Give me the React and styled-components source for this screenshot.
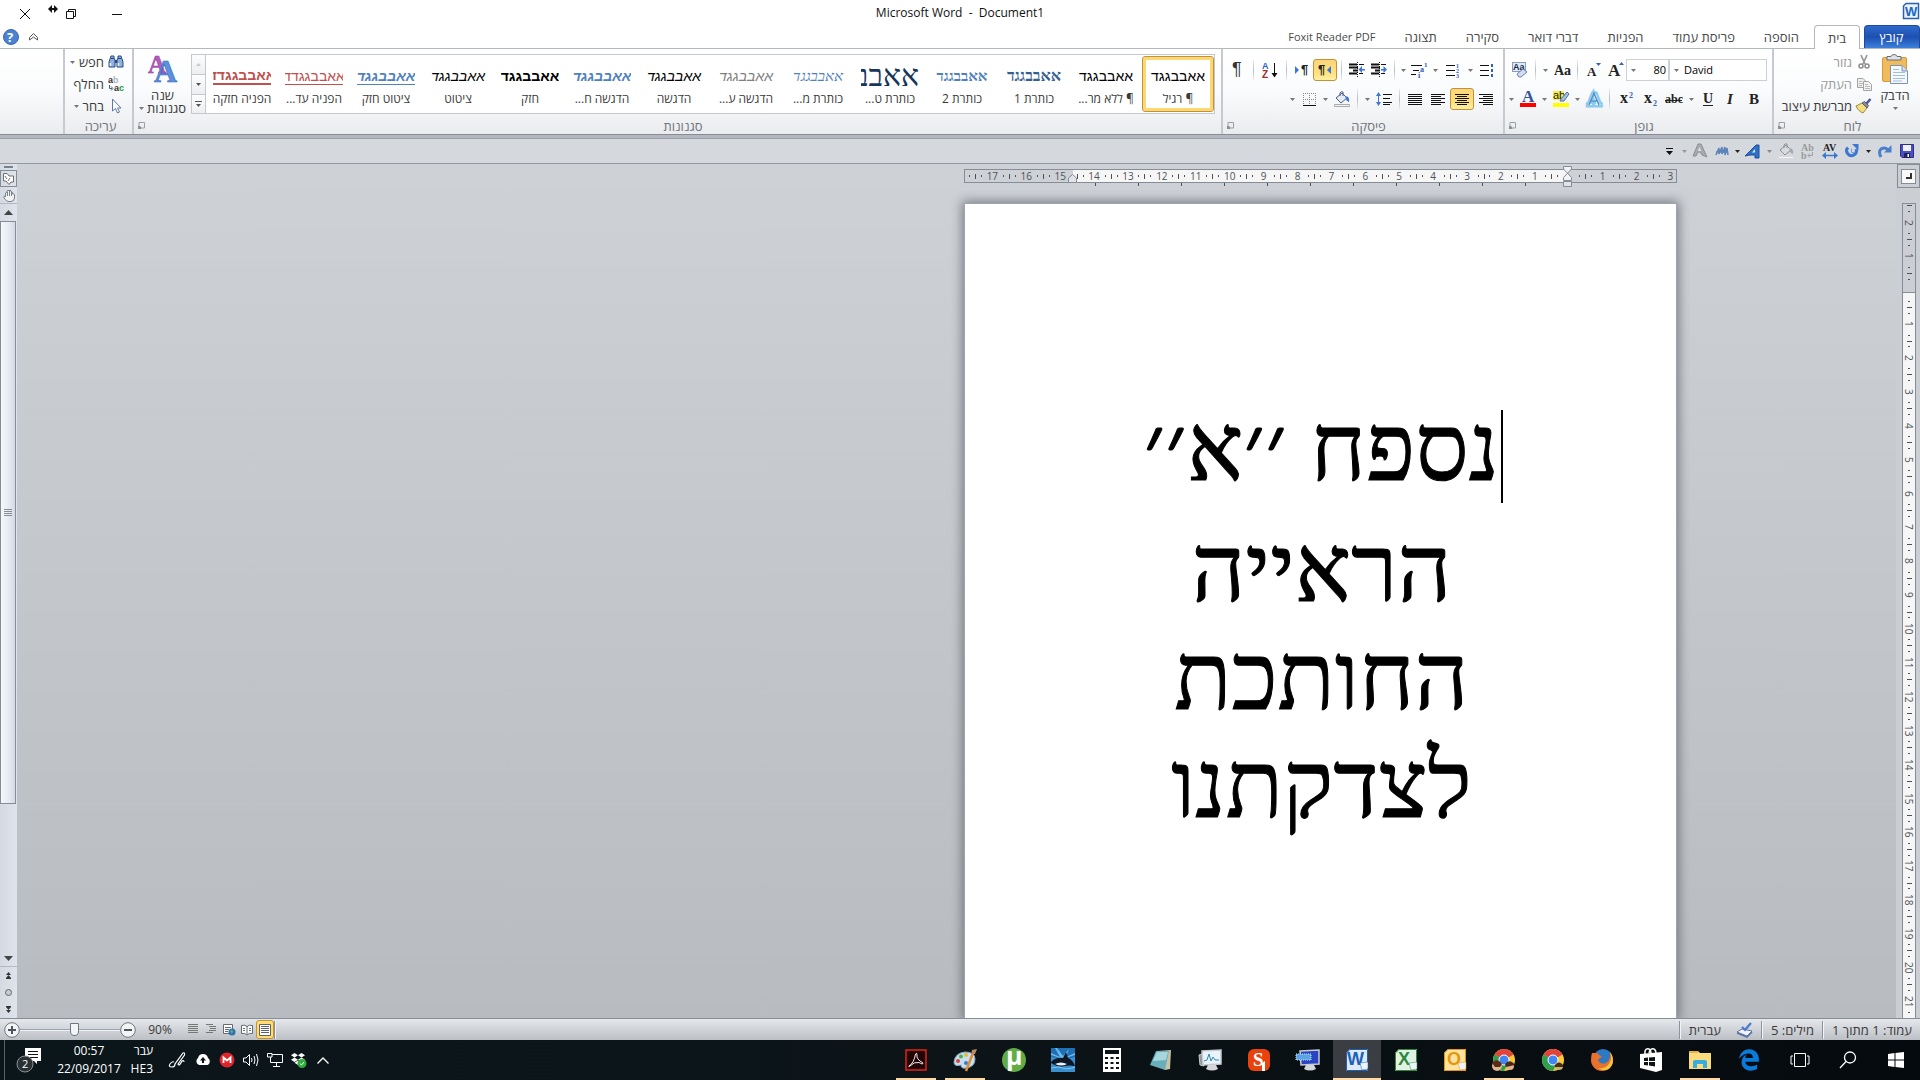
import React, { useState } from 'react';
import styled, { createGlobalStyle, css } from 'styled-components';
import { FaDropbox, FaEdgeLegacy } from 'react-icons/fa6';

const GlobalStyle = createGlobalStyle`
  *, *::before, *::after { box-sizing: border-box; }
  body {
    margin: 0;
    overflow: hidden;
    font-family: 'Open Sans', 'Liberation Sans', sans-serif;
    font-size: 13px;
    line-height: 16px;
    color: #3b3b3b;
  }
  button, select, input { font: inherit; color: inherit; }
  button {
    padding: 0;
    border: 0;
    background: none;
  }
  svg { display: block; flex: none; overflow: visible; }
  p, h1 { margin: 0; font-weight: 400; }
`;

const Screen = styled.div`
  display: flex;
  flex-direction: column;
  height: 100vh;
`;

/* ---------- title bar ---------- */

const TitleBar = styled.header`
  position: relative;
  display: grid;
  grid-template-columns: 1fr auto 1fr;
  height: 25px;
  background: #fff;
`;

const Title = styled.h1`
  padding-top: 5px;
  font-size: 12px;
  line-height: 16px;
  color: #111;
  white-space: pre;
`;

const AppIcon = styled.div`
  padding: 3px 1px 0 0;
`;

const WindowControls = styled.div`
  display: flex;
  justify-content: flex-end;
  padding-left: 2px;
`;

const WindowButton = styled.button`
  display: flex;
  align-items: center;
  justify-content: center;
  width: 46px;
  padding-top: 3px;
`;

const Pointer = styled.svg`
  position: absolute;
  left: 48px;
  top: 5px;
`;

/* ---------- tabs ---------- */

const TabStrip = styled.nav`
  display: flex;
  align-items: stretch;
  height: 24px;
  border-bottom: 1px solid #b3b8be;
  background: #fff;
`;

const Tab = styled.button`
  padding: 0 15px 0 14px;
  font-size: ${p => (p.$latin ? 11 : 13)}px;
  color: #4a4a4a;

  ${p => p.$file && css`
    width: 56px;
    margin-left: 4px;
    border: 1px solid #1d4a9c;
    border-bottom: 0;
    border-radius: 4px 4px 0 0;
    background: linear-gradient(#2f6acb, #1c50b0 50%, #3d80dd);
    color: #fff;
  `}

  ${p => p.$active && css`
    padding: 0;
    width: 46px;
    margin-bottom: -1px;
    border: 1px solid #b3b8be;
    border-bottom: 0;
    border-radius: 4px 4px 0 0;
    background: #fff;
  `}
`;

const TabTools = styled.div`
  display: flex;
  align-items: center;
  gap: 10px;
  margin-right: auto;
  padding-left: 3px;
`;

/* ---------- ribbon ---------- */

const Ribbon = styled.section`
  display: flex;
  height: 86px;
  padding-left: 63px;
  border-bottom: 1px solid #868d96;
  background: linear-gradient(#fff, #fbfcfd 45%, #f0f2f4 80%, #e9ebee);
`;

const Group = styled.div`
  display: flex;
  flex-direction: column;
  flex: ${p => (p.$width ? 'none' : '1')};
  width: ${p => (p.$width ? `${p.$width}px` : 'auto')};
  min-width: 0;
  padding-right: 5px;
  border-left: 2px solid #c6cad0;
`;

const GroupBody = styled.div`
  display: flex;
  flex: 1;
  min-height: 0;
`;

const GroupFooter = styled.div`
  display: flex;
  align-items: center;
  height: 17px;
  margin-right: -5px;
  padding-left: 4px;
  color: #71757b;
`;

const GroupName = styled.span`
  flex: 1;
  text-align: center;
`;

const Stack = styled.div`
  display: flex;
  flex-direction: column;
  gap: 7px;
  padding-top: 10px;
`;

const ToolRow = styled.div`
  display: flex;
  align-items: center;
  height: 22px;
`;

const Tool = styled.button`
  display: flex;
  align-items: center;
  justify-content: center;
  flex: none;
  width: ${p => p.$width || 22}px;
  height: 22px;
  ${p => p.$pressed && css`
    border: 1px solid #c2923a;
    border-radius: 3px;
    background: linear-gradient(#fbd57b, #ffdf7b 60%, #fff0a0);
  `}
`;

const Divider = styled.i`
  flex: none;
  width: 1px;
  height: 20px;
  margin: 0 4px;
  background: linear-gradient(#e9ebee, #b9bdc3, #e9ebee);
`;

const Combo = styled.label`
  position: relative;
  display: flex;
  align-items: center;
  width: ${p => p.$width}px;
  height: 22px;
  border: 1px solid #cdd0d5;
  background: #fff;

  svg {
    position: absolute;
    left: 4px;
  }

  select {
    width: 100%;
    height: 20px;
    padding: 0 2px 0 14px;
    border: 0;
    appearance: none;
    background: none;
    font-size: 11px;
    color: #000;
    direction: ltr;
    text-align-last: ${p => p.$align || 'left'};
  }
`;

const SmallCommands = styled.div`
  display: flex;
  flex-direction: column;
  padding: 2px 3px 0 0;
`;

const SmallCommand = styled.button`
  display: flex;
  align-items: center;
  gap: 4px;
  height: 22px;
  color: ${p => (p.$off ? '#9b9b9b' : '#3b3b3b')};
  white-space: nowrap;
`;

const BigCommand = styled.button`
  display: flex;
  flex-direction: column;
  align-items: center;
  width: ${p => p.$width}px;
  height: 68px;
  padding-top: 5px;
  line-height: 13px;

  > svg {
    margin-bottom: 5px;
  }
  > span {
    display: flex;
    align-items: center;
    gap: 3px;
    height: 13px;
  }
`;

const Gallery = styled.div`
  display: flex;
  flex: 1;
  min-width: 0;
  height: 60px;
  margin: 5px 1px 0 0;
  border: 1px solid #c5c9cd;
  background: #fff;
`;

const GalleryItems = styled.div`
  display: flex;
  flex: 1;
  overflow: hidden;
`;

const GalleryScroll = styled.div`
  display: grid;
  grid-template-rows: repeat(3, 1fr);
  width: 14px;
  border-right: 1px solid #c5c9cd;
`;

const ScrollStep = styled.button`
  display: flex;
  align-items: center;
  justify-content: center;
  background: linear-gradient(#fdfdfe, #eceef1);
  & + & {
    border-top: 1px solid #c5c9cd;
  }
`;

const StyleItem = styled.button`
  display: flex;
  flex-direction: column;
  align-items: center;
  flex: none;
  width: 72px;
  margin: 1px 0;
  padding-top: 4px;
  border: 1px solid transparent;
  border-radius: 3px;
  font-size: 12px;
  white-space: nowrap;
  ${p => p.$active && css`
    border-color: #c2923a;
    box-shadow: inset 0 0 0 3px #fcd872;
  `}
`;

const Preview = styled.span`
  display: flex;
  align-items: center;
  justify-content: ${p => p.$justify || 'center'};
  width: 58px;
  height: 30px;
  overflow: hidden;
  font-family: ${p => (p.$serif ? "'Liberation Serif', serif" : "'Liberation Sans', sans-serif")};
  font-size: ${p => p.$size || 14}px;
  font-weight: ${p => (p.$bold ? 700 : 400)};
  font-style: ${p => (p.$italic ? 'italic' : 'normal')};
  color: ${p => p.$color || '#000'};

  span {
    border-bottom: ${p => (p.$line ? `${p.$line}px solid` : 0)};
  }
`;

/* ---------- quick access ---------- */

const QuickAccess = styled.div`
  display: flex;
  align-items: center;
  height: 29px;
  padding: 4px 2px 0 0;
  border-bottom: 1px solid #9299a2;
  background: linear-gradient(#b4b8be 3px, #98a1ac 3px, #98a1ac 4px, #d5d9de 4px);
`;

/* ---------- workspace ---------- */

const Workspace = styled.main`
  display: flex;
  flex: 1;
  min-height: 0;
  background: linear-gradient(#ced1d6, #b8bbbf);
`;

const RulerColumn = styled.div`
  display: flex;
  flex-direction: column;
  width: 24px;
  background: #cbced3;
`;

const TabSelector = styled.button`
  display: flex;
  align-items: center;
  justify-content: center;
  width: 23px;
  height: 24px;
  margin-bottom: 15px;
  border: 1px solid #868d96;
  i {
    display: flex;
    align-items: center;
    justify-content: center;
    width: 15px;
    height: 15px;
    border: 1px solid #868d96;
    background: #f8f8f8;
  }
`;

const VRuler = styled.div`
  display: flex;
  flex-direction: column;
  flex: 1;
  width: 14px;
  margin-right: 4px;
  padding-top: 1px;
  border: 1px solid #868d96;
  border-bottom: 0;
  background: linear-gradient(transparent 88px, #868d96 88px, #868d96 89px, #f6f6f6 89px);
`;

const HRuler = styled.div`
  position: relative;
  display: flex;
  height: 14px;
  margin: 5px -1px 0;
  border: 1px solid #868d96;
  background: linear-gradient(90deg, transparent 108px, #f6f6f6 108px, #f6f6f6 603px, transparent 603px);
`;

const HScale = styled.div`
  display: flex;
  flex: 1;
  direction: ltr;
  justify-content: flex-end;
  overflow: hidden;
`;

const HCells = styled.div`
  display: flex;
  flex: none;
  width: 746px;
  margin-right: -11px;
`;

const Cell = styled.span`
  display: flex;
  flex: 1;
  align-items: center;
  justify-content: space-between;
  min-width: 0;
  min-height: 0;
  font-size: 10px;
  line-height: 12px;
  color: #4d5258;
  writing-mode: ${p => (p.$vertical ? 'vertical-rl' : 'horizontal-tb')};
  direction: ltr;

  &::before {
    content: '';
    width: ${p => (p.$vertical ? 5 : 1)}px;
    height: ${p => (p.$vertical ? 1 : 5)}px;
    background: #4d5258;
  }
  i {
    width: ${p => (p.$vertical ? 2 : 1)}px;
    height: ${p => (p.$vertical ? 1 : 2)}px;
    background: #4d5258;
  }
  b {
    display: flex;
    justify-content: center;
    width: ${p => (p.$vertical ? 12 : 11)}px;
    height: ${p => (p.$vertical ? 11 : 12)}px;
    font-weight: 400;
  }
  &::after {
    content: '';
  }
`;

const Marker = styled.svg`
  position: absolute;
  top: ${p => p.$top}px;
  left: ${p => p.$left}px;
`;

const TabStops = styled.div`
  display: flex;
  justify-content: flex-end;
  gap: 42px;
  height: 3px;
  margin: 0 150px 18px 0;
  direction: ltr;
  i {
    width: 1px;
    background: #4d5258;
  }
`;

const PageColumn = styled.div`
  display: flex;
  flex-direction: column;
  flex: none;
  width: 711px;
  margin-right: 220px;
`;

const Page = styled.article`
  flex: 1;
  padding: 190px 107px 0 109px;
  background: #fff;
  outline: 1px solid #9aa4b2;
  box-shadow: 0 0 10px 3px rgba(70, 75, 82, 0.6);
  clip-path: inset(-14px -14px 0 -14px);
  font-family: 'Liberation Serif', serif;
  font-size: 94px;
  line-height: 108px;
  color: #000;
  text-align: center;
  white-space: nowrap;
  -webkit-text-stroke: 1px #000;
`;

const FirstLine = styled.p`
  margin-bottom: 13px;
  span {
    position: relative;
  }
`;

const Caret = styled.i`
  position: absolute;
  top: 14px;
  right: -4px;
  width: 2px;
  height: 93px;
  background: #000;
`;

const ScrollBar = styled.aside`
  display: flex;
  flex-direction: column;
  width: 17px;
  margin-right: auto;
  background: linear-gradient(90deg, #d5dae2, #dfe3ec);
`;

const ScrollButton = styled.button`
  display: flex;
  align-items: center;
  justify-content: center;
  height: 17px;
  border-bottom: ${p => (p.$line ? '1px solid #b3b9c3' : 0)};
  border: ${p => p.$framed && '1px solid #868d96'};
`;

const SplitHandle = styled.i`
  width: 9px;
  height: 2px;
  margin: 2px 4px;
  background: #7b828b;
`;

const Track = styled.div`
  flex: 1;
`;

const Thumb = styled.div`
  display: flex;
  align-items: center;
  justify-content: center;
  width: 16px;
  height: 80%;
  margin-right: 1px;
  border: 1px solid #868d96;
  background: linear-gradient(90deg, #f5f7fa, #e9ecf2 50%, #d4d9e5);
`;

/* ---------- status bar ---------- */

const StatusBar = styled.footer`
  display: flex;
  align-items: center;
  height: 22px;
  border-top: 1px solid #868d96;
  background: linear-gradient(#e6e8ec, #d2d5d9 45%, #bcc0c5);
`;

const StatusItem = styled.button`
  height: 21px;
  padding: 0 8px;
`;

const StatusLine = styled.i`
  width: 2px;
  height: 18px;
  border-right: 1px solid #f2f3f5;
  background: #8d939b;
`;

const Zoom = styled.div`
  display: flex;
  align-items: center;
  margin-right: auto;
  padding-left: 4px;
`;

const ViewButton = styled.button`
  display: flex;
  align-items: center;
  justify-content: center;
  width: 18px;
  height: 19px;
  ${p => p.$active && css`
    border: 1px solid #c2923a;
    border-radius: 3px;
    background: #ffdc75;
  `}
`;

const ZoomValue = styled.button`
  width: 48px;
  font-size: 12px;
`;

const ZoomSlider = styled.input`
  width: 100px;
  height: 16px;
  margin: 0;
  appearance: none;
  background: linear-gradient(transparent 7px, #9aa3b3 7px, #9aa3b3 8px, #eef0f3 8px, #eef0f3 9px, transparent 9px);

  &::-webkit-slider-thumb {
    appearance: none;
    width: 9px;
    height: 13px;
    border: 1px solid #6d7785;
    border-radius: 1px 1px 5px 5px;
    background: #f4f5f7;
  }
`;

/* ---------- windows taskbar ---------- */

const Taskbar = styled.nav`
  display: flex;
  height: 40px;
  background: linear-gradient(90deg, #0b161b, #0c1418 50%, #050a0e);
  color: #fff;
`;

const AppList = styled.div`
  display: flex;
  gap: 1px;
  margin-right: 3px;
`;

const AppButton = styled.button`
  position: relative;
  display: flex;
  align-items: center;
  justify-content: center;
  width: 48px;
  height: 40px;
  background: ${p => (p.$active ? '#3a3e42' : 'none')};

  &::after {
    content: '';
    position: absolute;
    bottom: 0;
    left: ${p => (p.$active ? 0 : 4)}px;
    right: ${p => (p.$active ? 0 : 4)}px;
    height: 2px;
    background: ${p => (p.$open || p.$active ? '#fddaa8' : 'none')};
  }
`;

const Tray = styled.div`
  display: flex;
  align-items: center;
  margin-right: auto;
  margin-left: 4px;
  border-left: 1px solid #5a6063;
`;

const TrayButton = styled.button`
  display: flex;
  align-items: center;
  justify-content: center;
  width: ${p => p.$width || 24}px;
  height: 40px;
`;

const TrayText = styled.button`
  display: flex;
  flex-direction: column;
  justify-content: center;
  align-items: ${p => p.$align || 'center'};
  width: ${p => p.$width}px;
  height: 40px;
  padding-right: ${p => p.$pad || 0}px;
  font-size: 12px;
  line-height: 18px;
`;

/* ---------- icons ---------- */

const Svg = ({ w = 16, h = 16, children, ...rest }) => (
  <svg width={w} height={h} viewBox={`0 0 ${w} ${h}`} fill="none" aria-hidden="true" {...rest}>
    {children}
  </svg>
);

const Letter = ({ x, y, size = 16, color = '#222', family = 'Liberation Serif', weight = 700, children, ...rest }) => (
  <text x={x} y={y} fontSize={size} fill={color} fontFamily={`'${family}', serif`} fontWeight={weight} direction="ltr" {...rest}>
    {children}
  </text>
);

const Arrow = ({ color = '#777', up }) => (
  <Svg w={5} h={3}>
    <path d={up ? 'M0 3L2.500 0L5 3Z' : 'M0 0H5L2.500 3Z'} fill={color} />
  </Svg>
);

const Lines = ({ rows, color = '#111', w = 14 }) => (
  <Svg w={w} h={11}>
    {rows.map(([x, len], i) => (
      <path key={i} d={`M${x} ${i * 2 + 0.5}h${len}`} stroke={color} />
    ))}
  </Svg>
);

const Launcher = () => (
  <Svg w={7} h={7}>
    <path d="M1 3V.5H6.500V6H4" stroke="#9ba0a6" />
    <path d="M0 7V3.500H1.500L3.500 5.500V7Z" fill="#8b9096" />
  </Svg>
);

const WordMark = () => (
  <Svg>
    <path d="M3 .5H15.500V15.500H.5V3Z" fill="#eaf3fc" stroke="#2c62ad" strokeWidth="1.500" />
    <Letter x={2} y={13} size={13} color="#1767c5" family="Liberation Sans">W</Letter>
  </Svg>
);

const Help = () => (
  <Svg>
    <circle cx="8" cy="8" r="7.500" fill="#4b82d0" stroke="#3a66b0" />
    <Letter x={4} y={13} size={13} color="#fff" family="Open Sans">?</Letter>
  </Svg>
);

const Paste = () => (
  <Svg w={26} h={30}>
    <rect x=".5" y="3.500" width="24" height="24" rx="1.500" fill="#f0bb5e" stroke="#d79c3a" />
    <path d="M5 2.500H9C9 0 15 0 15 2.500H19V6H5Z" fill="#dfe3e8" stroke="#666d76" />
    <path d="M8.500 11.500H20L25.500 17V29.500H8.500Z" fill="#f4f9ff" stroke="#7f93ae" />
    <path d="M20 11.500V17H25.500" fill="#cfdff2" stroke="#7f93ae" />
    <path d="M11 15.500H17M11 18.500H23M11 21.500H23M11 24.500H23M11 27H20" stroke="#a6bdd8" />
  </Svg>
);

const Cut = () => (
  <Svg>
    <path d="M5 1L9 10M11 1L7 10" stroke="#9b9b9b" strokeWidth="1.800" />
    <circle cx="5" cy="12" r="2" stroke="#8c8c8c" strokeWidth="1.500" />
    <circle cx="11" cy="12" r="2" stroke="#8c8c8c" strokeWidth="1.500" />
  </Svg>
);

const Copy = () => (
  <Svg>
    <path d="M1.500 2.500H7L9.500 5V11.500H1.500Z" fill="#efefef" stroke="#a2a2a2" />
    <path d="M3 5.500H6M3 7.500H7M3 9.500H6" stroke="#b9b9b9" />
    <path d="M7.500 5.500H12.500L15.500 8.500V14.500H7.500Z" fill="#f4f4f4" stroke="#a2a2a2" />
    <path d="M9 8.500H12M9 10.500H14M9 12.500H14" stroke="#b9b9b9" />
  </Svg>
);

const Painter = () => (
  <Svg>
    <path d="M0 8L6 5L11 10L7 15C4 14 1 11 0 8Z" fill="#f2df83" stroke="#a08a35" />
    <path d="M6 5L8.500 3.500L12.500 7.500L11 10Z" fill="#8b8d99" stroke="#5b5d6b" />
    <path d="M10.500 5.500L14.500 1" stroke="#4c55a0" strokeWidth="2.500" />
  </Svg>
);

const Binoculars = () => (
  <Svg>
    <path d="M3 2H6V4L7 6V13H1V8Z" fill="#8fb1dc" stroke="#274a86" />
    <path d="M10 2H13L15 8V13H9V6L10 4Z" fill="#8fb1dc" stroke="#274a86" />
    <path d="M7 6H9V9H7Z" fill="#274a86" />
    <path d="M2.500 9V12M10.500 9V12" stroke="#e9f1fb" strokeWidth="1.500" />
    <path d="M3 4.500H6M10 4.500H13" stroke="#274a86" />
  </Svg>
);

const Replace = () => (
  <Svg>
    <Letter x={0} y={7} size={9} color="#333" family="Liberation Sans">a</Letter>
    <Letter x={5} y={7} size={9} color="#b5b5b5" family="Liberation Sans">b</Letter>
    <Letter x={6} y={15} size={9} color="#333" family="Liberation Sans">a</Letter>
    <Letter x={11} y={15} size={9} color="#1f9a2c" family="Liberation Sans">c</Letter>
    <path d="M1.500 9V12.500H4M3 10.500L5 12.500L3 14.500" stroke="#3a5ea0" />
  </Svg>
);

const SelectArrow = () => (
  <Svg>
    <path d="M4.500 1V13L7.500 10.500L9.500 15L11.500 14L9.500 10H13Z" fill="#fff" stroke="#5b78a8" />
  </Svg>
);

const ChangeStyles = () => (
  <Svg w={30} h={30}>
    <Letter x={0} y={19} size={25} color="#b45bbd" stroke="#8e3c98" strokeWidth=".5">A</Letter>
    <Letter x={6} y={28} size={32} color="#5b92e0" stroke="#3765b4" strokeWidth=".6">A</Letter>
  </Svg>
);

const GrowFont = ({ small }) => (
  <Svg w={16} h={18}>
    <Letter x={small ? 2 : 1} y={15} size={small ? 13 : 17}>A</Letter>
    <path d={small ? 'M11 2H16L13.500 5Z' : 'M12 4H17L14.500 1Z'} fill="#3b62ad" />
  </Svg>
);

const CaseIcon = () => (
  <Svg>
    <Letter x={0} y={13} size={14}>Aa</Letter>
  </Svg>
);

const ClearFormat = () => (
  <Svg>
    <rect x=".5" y=".5" width="13" height="9" fill="#dfeaf8" stroke="#8a9dbd" />
    <Letter x={1} y={8} size={9} color="#1b2a4a" family="Liberation Sans">Aa</Letter>
    <path d="M5 12L11 7L15 10L9 15Q6 16 5 12Z" fill="#d2dcf4" stroke="#6d7fae" />
  </Svg>
);

const Strike = () => (
  <Svg w={18}>
    <Letter x={0} y={12} size={12}>abc</Letter>
    <path d="M0 9.500H17" stroke="#222" />
  </Svg>
);

const Script = ({ sub }) => (
  <Svg>
    <Letter x={2} y={12} size={16}>x</Letter>
    <Letter x={11} y={sub ? 15 : 7} size={8} color="#3b62ad">2</Letter>
  </Svg>
);

const GlowA = () => (
  <Svg>
    <Letter x={2} y={14} size={17} color="#fff" stroke="#8ccbf0" strokeWidth="5" paintOrder="stroke">A</Letter>
    <path d="M3 14L8 2.500L13 14M5 10H11" stroke="#4f90c8" strokeWidth="1.500" />
  </Svg>
);

const Highlighter = () => (
  <Svg h={18}>
    <path d="M0 1H11V10H0Z" fill="#f6ee4c" />
    <Letter x={0} y={9} size={11} color="#222" family="Liberation Sans" weight={400}>ab</Letter>
    <path d="M8 9L14 2L16 4L11 11L7 11Z" fill="#a9bfe0" stroke="#4f6fa8" />
    <path d="M0 13H16V17H0Z" fill="#ff0" />
  </Svg>
);

const FontColor = () => (
  <Svg h={18}>
    <Letter x={2} y={12} size={17} color="#33549a">A</Letter>
    <path d="M0 13H16V17H0Z" fill="#f00" />
  </Svg>
);

const Bullets = ({ numbered }) => (
  <Svg w={14} h={13}>
    <path d="M0 1.500H9M0 6.500H9M0 11.500H9" stroke="#111" />
    {numbered ? (
      [4, 9, 14].map((y, i) => <Letter key={y} x={10} y={y} size={6} color="#2f5fc0">{i + 1}</Letter>)
    ) : (
      <path d="M11 0H13V3H11ZM11 5H13V8H11ZM11 10H13V13H11Z" fill="#2f5fc0" />
    )}
  </Svg>
);

const MultiLevel = () => (
  <Svg>
    <path d="M0 3.500H11M2 8.500H8M0 12.500H5" stroke="#111" />
    <Letter x={13} y={5} size={7} color="#2f5fc0">1</Letter>
    <Letter x={9} y={10} size={8} color="#2f5fc0">a</Letter>
    <Letter x={7} y={16} size={8} color="#2f5fc0">i</Letter>
  </Svg>
);

const Indent = ({ out }) => (
  <Svg>
    <path d="M0 2.500H8M0 5.500H9M4 8.500H9M0 11.500H8" stroke="#111" strokeWidth="2" />
    <path d="M8.500 0V16" stroke="#111" strokeDasharray="1 1" />
    <path d="M10 2.500H15M10 11.500H14" stroke="#111" strokeWidth="1" />
    <path d={out ? 'M16 7H13V4L9.500 7.500L13 11V8.500H16Z' : 'M10 7H12.500V4L16 7.500L12.500 11V8.500H10Z'} fill="#3b76d6" />
  </Svg>
);

const Direction = ({ rtl }) => (
  <Svg w={14} h={12}>
    <Letter x={rtl ? 0 : 6} y={10} size={13} color="#222" family="Liberation Sans">¶</Letter>
    <path d={rtl ? 'M13 2V10L9 6Z' : 'M0 2V10L4 6Z'} fill="#3b76d6" />
  </Svg>
);

const Sort = () => (
  <Svg>
    <Letter x={0} y={7} size={9} color="#2f5fc0" family="Liberation Sans">A</Letter>
    <Letter x={0} y={16} size={10} color="#9c2f2f" family="Liberation Sans">Z</Letter>
    <path d="M12.500 1V14" stroke="#111" />
    <path d="M9.500 11H15.500L12.500 15.500Z" fill="#111" />
  </Svg>
);

const LineSpacing = () => (
  <Svg>
    <path d="M7 3.500H16M7 7.500H14M7 11.500H16M7 13.500H14" stroke="#111" />
    <path d="M2.500 4V12" stroke="#3b76d6" />
    <path d="M0 5L2.500 1L5 5ZM0 11L2.500 15L5 11Z" fill="#3b76d6" />
  </Svg>
);

const Bucket = ({ off }) => (
  <Svg>
    <path d="M2 7L8 2L13 7L7 12Z" fill={off ? '#d9dbde' : '#e4ebf5'} stroke={off ? '#8c9095' : '#4a5f86'} />
    <path d="M6 5V2Q7 0 9 1V5" stroke={off ? '#8c9095' : '#4a5f86'} />
    <path d="M11 5Q16 5 15 11Q12 10 12 8Z" fill={off ? '#a4a8ad' : '#3b76d6'} />
    <path d="M.5 13.500H15.500V15.500H.5Z" fill="#f4f4f4" stroke={off ? '#dcd9dc' : '#aaa'} />
  </Svg>
);

const Borders = () => (
  <Svg w={13} h={13}>
    <path d="M.5 0V12M6.500 0V12M12.500 0V12M0 .5H13M0 6.500H13" stroke="#888" strokeDasharray="1 1" />
    <path d="M0 12.500H13" stroke="#111" />
  </Svg>
);

const Save = () => (
  <Svg>
    <path d="M1.500 1.500H14.500V14.500H3L1.500 13Z" fill="#4a4fc4" stroke="#2c2f86" />
    <path d="M4 2H12V8H4Z" fill="#eef1fb" />
    <path d="M5 10H11V15H5Z" fill="#20235f" />
    <path d="M8.500 11H10V14H8.500Z" fill="#fff" />
  </Svg>
);

const Redo = () => (
  <Svg>
    <path d="M4 14Q1 9 4 6Q8 3.500 11.500 7" stroke="#4a7fcc" strokeWidth="3" />
    <path d="M7 9.500H14.500V2Z" fill="#4a7fcc" />
  </Svg>
);

const Undo = () => (
  <Svg>
    <path d="M4 4.500A4.800 4.800 0 1 0 12 6" stroke="#3b76d0" strokeWidth="3" />
    <path d="M8 1H14.500V7.500Z" fill="#3b76d0" />
    <path d="M7.500 5.500V9.500H10.500" stroke="#6f9fe0" />
  </Svg>
);

const Spacing = () => (
  <Svg>
    <Letter x={1} y={8} size={10}>AV</Letter>
    <path d="M2 12.500H14" stroke="#3b76d0" strokeWidth="1.500" />
    <path d="M4 9V16L0 12.500ZM12 9V16L16 12.500Z" fill="#3b76d0" />
  </Svg>
);

const GrayReplace = () => (
  <Svg>
    <Letter x={1} y={8} size={10} color="#999">Ab</Letter>
    <Letter x={1} y={16} size={10} color="#999">b</Letter>
    <path d="M8 12.500H12.500V9M10 10.500L8 12.500L10 14.500" stroke="#a0a0a0" />
  </Svg>
);

const WordArt = ({ gray }) => (
  <Svg>
    <path d={gray ? 'M1 13L6 1H9L15 14L10 12L8 9H6L4 13Z' : 'M0 13L11 2H14V15H10V12H5Z'} fill={gray ? '#a7abb0' : '#2f6fc8'} stroke={gray ? '#8d9196' : '#1d4f9c'} />
    <path d={gray ? 'M6 8L7.500 4L9 8Z' : 'M7 9.500L10 6V9.500Z'} fill="#dfe6f0" />
  </Svg>
);

const Scribble = () => (
  <Svg>
    <path d="M2 12L5 5V11L8 4V11L11 4V12L13 5L14 12M2 9H14" stroke="#5b82b8" strokeWidth="1.500" />
  </Svg>
);

const SelectObject = () => (
  <Svg w={13} h={13}>
    <path d="M1.500 1.500H5L7 4H11.500V10H9L7 12.500L4 9H1.500Z" fill="#fff" stroke="#6b6f78" />
    <path d="M3 4L5 7M8 6L6 9" stroke="#6b6f78" />
  </Svg>
);

const Hand = () => (
  <Svg w={12} h={13}>
    <path d="M2.500 7V4Q3.500 3 4 4V2Q5 0 6 2Q7 0 8 2V3Q9 2 9.500 4V5Q11 4 11.500 6V9Q11 12.500 8 12.500H5Q3 12 1 9Q0 7 2.500 7V8M4.500 3V7M6.500 2V7M8.500 3V7" fill="#f3f3f3" stroke="#7b828b" />
  </Svg>
);

const Proof = () => (
  <Svg>
    <path d="M0 10L5 7L15 9L10 14Z" fill="#f1f4fa" stroke="#5f74ad" />
    <path d="M0 11L10 15L15 10" stroke="#5f74ad" strokeWidth="1.500" />
    <path d="M5 5L8 8L14 1" stroke="#4a78d0" strokeWidth="2.200" />
  </Svg>
);

const PrintView = () => (
  <Svg w={12} h={12}>
    <path d="M.5 .5H11.500V11.500H.5Z" fill="#fff" stroke="#5d6268" />
    <path d="M2 2.500H10M2 4.500H10M2 6.500H10M2 8.500H10" stroke="#5d6268" />
  </Svg>
);

const ReadView = () => (
  <Svg w={12} h={12}>
    <path d="M.5 1.500Q4 .5 6 2.500Q8 .5 11.500 1.500V9.500Q8 8.500 6 11Q4 8.500 .5 9.500Z" fill="#fff" stroke="#666b72" />
    <path d="M6 2V10M2 4.500H4M2 6.500H4M8 4.500H10M8 6.500H10" stroke="#666b72" />
  </Svg>
);

const WebView = () => (
  <Svg w={13} h={12}>
    <path d="M.5 .5H9.500V9.500H.5Z" fill="#fff" stroke="#666b72" />
    <path d="M2 3.500H8M2 5.500H6M2 7.500H5" stroke="#666b72" />
    <circle cx="9" cy="8" r="3.500" fill="#2f6fb8" />
    <path d="M7 7Q9 5 10 7L9 10Z" fill="#5db566" />
  </Svg>
);

const ZoomSign = ({ plus }) => (
  <Svg>
    <circle cx="8" cy="8" r="7.300" fill="#f3f4f6" stroke="#70767e" />
    <path d={plus ? 'M4 8H12M8 4V12' : 'M4 8H12'} stroke="#50555b" strokeWidth="2" />
  </Svg>
);

const Acrobat = () => (
  <Svg w={22} h={22}>
    <path d="M1 1H21V21H1Z" fill="#220607" stroke="#e2231a" strokeWidth="1.500" />
    <path d="M4 17Q9 14 10.500 5Q12 3 12 6Q11 10 18 14Q18 16 14 13.500Q9 12.500 5 17Q3 18 4 17Z" stroke="#f3e8e8" />
  </Svg>
);

const Paint = () => (
  <Svg w={24} h={24}>
    <path d="M1 14Q2 5 12 4Q22 4 22 11Q22 19 13 20Q8 21 8 17Q1 19 1 14Z" fill="#c5dff0" stroke="#86a9c2" />
    <circle cx="5" cy="13" r="2" fill="#d9433b" />
    <circle cx="8" cy="8.500" r="2" fill="#56a84f" />
    <circle cx="13" cy="7" r="2" fill="#e6b93d" />
    <circle cx="13" cy="15" r="2" fill="#3b7ac2" />
    <path d="M13 23L20 5" stroke="#e08e35" strokeWidth="2.500" />
    <path d="M18.500 6L19 2L24 1L22 6Z" fill="#b98d62" />
  </Svg>
);

const Torrent = () => (
  <Svg w={24} h={24}>
    <circle cx="12" cy="12" r="12" fill="#62ac47" />
    <Letter x={4} y={17} size={25} color="#fff" family="Open Sans">µ</Letter>
  </Svg>
);

const Orca = () => (
  <Svg w={24} h={24}>
    <path d="M0 0H24V24H0Z" fill="#3a8fd0" />
    <path d="M0 0H24V9L17 11L12 8L6 10L0 9Z" fill="#1f6fb6" />
    <path d="M0 5L9 9L4 0H6L12 8L18 1L15 9L24 5V7L12 11L0 7Z" fill="#6bb8e8" />
    <path d="M0 14Q5 9 12 10L15 4L17 10Q22 12 24 18Q18 17 14 18Q8 20 0 15Z" fill="#0d1726" />
    <path d="M4 16Q10 13 16 16Q11 19 4 16Z" fill="#e9f3fa" />
    <path d="M0 20Q8 18 12 20T24 19" stroke="#7cc6ee" />
  </Svg>
);

const Calculator = () => (
  <Svg w={18} h={24}>
    <path d="M0 0H18V24H0Z" fill="#fff" />
    <path d="M2 2H16V6H2Z" fill="#0c1418" />
    {[9, 14, 19].map(y => (
      <path key={y} d={`M2 ${y}H5V${y + 2}H2ZM7.500 ${y}H10.500V${y + 2}H7.500ZM13 ${y}H16V${y + 2}H13Z`} fill="#0c1418" />
    ))}
  </Svg>
);

const Notebook = () => (
  <Svg w={24} h={24}>
    <path d="M8 3L22 2L21 21L16 22Z" fill="#c9c3a5" />
    <path d="M7 3L20 3L16 22L1 17Z" fill="#6aaebb" />
    <path d="M8 4L19 4L17 12L4 13Z" fill="#a7d7dd" />
  </Svg>
);

const Monitor = ({ blue }) => (
  <Svg w={24} h={24}>
    {!blue && <path d="M1 7L6 5V18L2 17Z" fill="#8f969c" stroke="#c7cbd0" />}
    <path d="M4 3L23 2V16L5 17Z" fill={blue ? '#2a44c4' : '#e8f3fa'} stroke="#c7cbd0" strokeWidth="1.500" />
    {blue ? (
      <path d="M0 6H15V12H0Z" fill="#5aa4e6" stroke="#cfe4f8" strokeDasharray="1 1" />
    ) : (
      <path d="M6 13L9 12L11 6L13 13L15 9L17 12H21" stroke="#3384b8" />
    )}
    <path d="M10 17H18L20 21Q14 24 8 21Z" fill="#d4d7da" />
  </Svg>
);

const SApp = () => (
  <Svg w={22} h={22}>
    <rect width="22" height="22" rx="6" fill="#e8430c" />
    <Letter x={5} y={17} size={19} color="#fff">S</Letter>
    <path d="M14 22V14L17 12V22Z" fill="#fff" />
  </Svg>
);

const Office = ({ letter, color, tint }) => (
  <Svg w={22} h={22}>
    <path d="M4 0H22V22H0V4Z" fill={tint} />
    <path d="M4 .5H21.500V21.500H.5V4Z" stroke={color} />
    <Letter x={letter === 'W' ? 1 : 3} y={16} size={18} color={color} family="Liberation Sans">{letter}</Letter>
    <path d="M14 14L22 13V20L16 21Z" fill="#eef4fb" stroke={color} strokeWidth=".5" />
  </Svg>
);

const Chrome = ({ people }) => (
  <Svg w={24} h={24}>
    <circle cx="12" cy="12" r="11" fill="#fcc934" />
    <path d="M12 12L2.500 6.500A11 11 0 0 1 21.500 6.500Z" fill="#e0443a" />
    <path d="M12 12L2.500 6.500A11 11 0 0 0 12 23L16 15Z" fill="#2e9e4f" />
    <circle cx="12" cy="12" r="5" fill="#4285f4" stroke="#fff" strokeWidth="1" />
    <circle cx="18" cy="18" r="4" fill={people ? '#e2b48f' : '#c9b26b'} />
    <path d={people ? 'M13 16Q18 10 23 17L14 19Z' : 'M14 17Q18 12 22 17V19H14Z'} fill="#4c2a18" />
    {people && <circle cx="5" cy="18" r="5" fill="#e2b48f" />}
    {people && <path d="M0 15Q5 9 10 16L8 19H3Z" fill="#5c2a16" />}
  </Svg>
);

const Firefox = () => (
  <Svg w={24} h={24}>
    <circle cx="13" cy="10.500" r="9.500" fill="#2f78c4" />
    <path d="M2 5Q1 8 1 12A11 11 0 0 0 23 12Q23 8 20 4Q21 12 16 15Q10 17 8 12Q9 10 12 9Q9 7 7 5Q4 5 2 5Z" fill="#e8722a" />
    <path d="M20 4Q23 12 18 17Q14 21 8 20Q18 26 22.500 16Q24 9 20 4Z" fill="#f9c13c" />
  </Svg>
);

const Store = () => (
  <Svg w={22} h={24}>
    <path d="M0 6L22 4V22L16 24L0 20Z" fill="#fff" />
    <path d="M5 6V3Q6 0 9 1Q11 2 11 5M9 5Q10 0 14 1Q16 2 16 5" stroke="#fff" strokeWidth="1.500" />
    <path d="M4 10L8 9.500V13H4ZM9 9.500L15 9V13H9ZM4 14H8V17.500L4 17ZM9 14H15V18.500L9 17.500Z" fill="#0c1418" />
  </Svg>
);

const Folder = () => (
  <Svg w={22} h={20}>
    <path d="M0 1H9L11 3H22V19H0Z" fill="#fbdc7c" />
    <path d="M0 1H9V3H0Z" fill="#e3b34a" />
    <path d="M4 18V12Q4 10 6 10H16Q18 10 18 12V18H14V14H8V18Z" fill="#36ace0" />
  </Svg>
);

const TaskView = () => (
  <Svg w={20} h={14}>
    <path d="M4.500 .5H15.500V13.500H4.500ZM3 3H1V11H3M17 3H19V11H17" stroke="#fff" />
  </Svg>
);

const Search = () => (
  <Svg w={18} h={18}>
    <circle cx="11" cy="6.500" r="5.500" stroke="#fff" strokeWidth="1.300" />
    <path d="M7 10.500L1 17" stroke="#fff" strokeWidth="1.300" />
  </Svg>
);

const Start = () => (
  <Svg>
    <path d="M0 2L6.500 1V7.500H0ZM7.500 1L16 0V7.500H7.500ZM0 8.500H6.500V15L0 14ZM7.500 8.500H16V16L7.500 15Z" fill="#fff" />
  </Svg>
);

const Notifications = () => (
  <Svg w={24} h={24}>
    <path d="M8 0H24V13H20V16L17 13H8Z" fill="#fff" />
    <path d="M11 3.500H21M11 6.500H21M11 9.500H21" stroke="#0c1418" />
    <circle cx="8" cy="16" r="8" fill="#2a3135" stroke="#8b9194" />
    <Letter x={5} y={20} size={11} color="#fff" family="Open Sans" weight={400}>2</Letter>
  </Svg>
);

const Pen = () => (
  <Svg>
    <path d="M1 12Q-1 15 3 15Q6 15 6 12L14 1Q16 0 15.500 3L9 12Q10 15 13 9Q15 8 15 10M1 12Q3 9 5 10" stroke="#fff" strokeWidth="1.200" />
  </Svg>
);

const Cloud = () => (
  <Svg>
    <path d="M4 13A4 4 0 0 1 3 6Q4 2 8 2Q12 2 13 6A4 4 0 0 1 12.500 13Z" fill="#fff" />
    <path d="M8 5L5 8.500H7V11H9V8.500H11Z" fill="#0c1418" />
  </Svg>
);

const Mega = () => (
  <Svg>
    <circle cx="8" cy="8" r="7.500" fill="#e0242c" />
    <path d="M4.500 11V5.500L8 8.500L11.500 5.500V11" stroke="#fff" strokeWidth="1.800" />
  </Svg>
);

const Sound = () => (
  <Svg>
    <path d="M.5 6H3L6.500 2.500V13.500L3 10H.5Z" stroke="#fff" />
    <path d="M8.500 6Q9.500 8 8.500 10M11 4Q13 8 11 12M13.500 2Q16.500 8 13.500 14" stroke="#fff" />
  </Svg>
);

const Network = () => (
  <Svg>
    <path d="M3.500 5V10.500H15.500V2.500H5M9.500 10.500V14.500M6 14.500H13M.5 1.500H5V5H.5Z" stroke="#fff" />
  </Svg>
);

const DropboxSynced = () => (
  <Svg>
    <FaDropbox x="0" y="0" size={14} color="#fff" />
    <circle cx="11" cy="11.500" r="4.500" fill="#2eae3d" />
    <path d="M9 11.500L10.500 13L13 10" stroke="#fff" />
  </Svg>
);

/* ---------- data ---------- */

const TABS = ['הוספה', 'פריסת עמוד', 'הפניות', 'דברי דואר', 'סקירה', 'תצוגה'];

const SAMPLE = 'אאבבגגד';

const STYLES = [
  { name: '¶ רגיל', active: true },
  { name: '¶ ללא מר...' },
  { name: 'כותרת 1', bold: true, color: '#365f91', size: 16, serif: true },
  { name: 'כותרת 2', bold: true, color: '#4f81bd', size: 15, serif: true },
  { name: 'כותרת ט...', color: '#17365d', size: 30, justify: 'flex-start', serif: true },
  { name: 'כותרת מ...', italic: true, color: '#4f81bd', size: 15, serif: true },
  { name: 'הדגשה ע...', italic: true, color: '#808080' },
  { name: 'הדגשה', italic: true },
  { name: 'הדגשה ח...', italic: true, bold: true, color: '#4f81bd' },
  { name: 'חזק', bold: true },
  { name: 'ציטוט', italic: true },
  { name: 'ציטוט חזק', italic: true, bold: true, color: '#4f81bd', line: 1 },
  { name: 'הפניה עד...', color: '#c0504d', line: 1, sample: 'אאבבגגדד' },
  { name: 'הפניה חזקה', bold: true, color: '#c0504d', line: 2, sample: 'אאבבגגדד' },
];

const APPS = [
  { name: 'Edge', icon: <FaEdgeLegacy size={22} color="#0a7bdb" /> },
  { name: 'File Explorer', icon: <Folder />, open: true },
  { name: 'Store', icon: <Store /> },
  { name: 'Firefox', icon: <Firefox /> },
  { name: 'Chrome', icon: <Chrome /> },
  { name: 'Chrome profile', icon: <Chrome people />, open: true },
  { name: 'Outlook', icon: <Office letter="O" color="#e8960c" tint="#fce3a0" /> },
  { name: 'Excel', icon: <Office letter="X" color="#2c8a3e" tint="#e2f2e2" /> },
  { name: 'Word', icon: <Office letter="W" color="#1d5fb4" tint="#dbe9f8" />, active: true },
  { name: 'Remote Desktop', icon: <Monitor blue /> },
  { name: 'S', icon: <SApp /> },
  { name: 'Task Manager', icon: <Monitor /> },
  { name: 'Notebook', icon: <Notebook /> },
  { name: 'Calculator', icon: <Calculator /> },
  { name: 'Orca', icon: <Orca /> },
  { name: 'Torrent', icon: <Torrent /> },
  { name: 'Paint', icon: <Paint />, open: true },
  { name: 'Acrobat', icon: <Acrobat />, open: true },
];

const range = (from, to) => Array.from({ length: to - from + 1 }, (_, i) => from + i);

const H_MARKS = [...range(0, 18).reverse(), ...range(1, 3)];
const V_MARKS = [2, 1, ...range(0, 21)];

/* ---------- parts ---------- */

const DropTool = ({ label, width = 11, color }) => (
  <Tool $width={width} aria-label={label}>
    <Arrow color={color} />
  </Tool>
);

const Scale = ({ marks, vertical }) =>
  marks.map((n, i) => (
    <Cell key={i} $vertical={vertical}>
      <i />
      <b>{n > 0 && n}</b>
      <i />
    </Cell>
  ));

const GroupLabel = ({ children, launcher = true }) => (
  <GroupFooter>
    <GroupName>{children}</GroupName>
    {launcher && (
      <button aria-label={`${children} options`}>
        <Launcher />
      </button>
    )}
  </GroupFooter>
);

const ClipboardGroup = () => (
  <Group $width={148}>
    <GroupBody>
      <BigCommand $width={40}>
        <Paste />
        <span>הדבק</span>
        <span><Arrow /></span>
      </BigCommand>
      <SmallCommands>
        <SmallCommand $off><Cut />גזור</SmallCommand>
        <SmallCommand $off><Copy />העתק</SmallCommand>
        <SmallCommand><Painter />מברשת עיצוב</SmallCommand>
      </SmallCommands>
    </GroupBody>
    <GroupLabel>לוח</GroupLabel>
  </Group>
);

const FontGroup = () => (
  <Group $width={269}>
    <GroupBody>
      <Stack>
        <ToolRow>
          <Combo $width={98}>
            <Arrow />
            <select aria-label="Font"><option>David</option></select>
          </Combo>
          <Combo $width={43} $align="right">
            <Arrow />
            <select aria-label="Font size"><option>80</option></select>
          </Combo>
          <Tool aria-label="Grow font"><GrowFont /></Tool>
          <Tool aria-label="Shrink font"><GrowFont small /></Tool>
          <Divider />
          <Tool aria-label="Change case"><CaseIcon /></Tool>
          <DropTool label="Case options" />
          <Divider />
          <Tool aria-label="Clear formatting"><ClearFormat /></Tool>
        </ToolRow>
        <ToolRow>
          <Tool $width={24} aria-label="Bold"><Svg w={12}><Letter x={0} y={13} size={15}>B</Letter></Svg></Tool>
          <Tool $width={24} aria-label="Italic"><Svg w={8}><Letter x={0} y={13} size={15} fontStyle="italic">I</Letter></Svg></Tool>
          <Tool aria-label="Underline">
            <Svg w={12}>
              <Letter x={1} y={12} size={14}>U</Letter>
              <path d="M1 14.500H11" stroke="#222" />
            </Svg>
          </Tool>
          <DropTool label="Underline options" />
          <Tool $width={24} aria-label="Strikethrough"><Strike /></Tool>
          <Tool $width={24} aria-label="Subscript"><Script sub /></Tool>
          <Tool $width={24} aria-label="Superscript"><Script /></Tool>
          <Divider />
          <Tool aria-label="Text effects"><GlowA /></Tool>
          <DropTool label="Effects options" />
          <Tool aria-label="Highlight"><Highlighter /></Tool>
          <DropTool label="Highlight options" />
          <Tool aria-label="Font colour"><FontColor /></Tool>
          <DropTool label="Font colour options" />
        </ToolRow>
      </Stack>
    </GroupBody>
    <GroupLabel>גופן</GroupLabel>
  </Group>
);

const ParagraphGroup = () => (
  <Group $width={282}>
    <GroupBody>
      <Stack>
        <ToolRow>
          <Tool aria-label="Bullets"><Bullets /></Tool>
          <DropTool label="Bullet options" />
          <Tool $width={24} aria-label="Numbering"><Bullets numbered /></Tool>
          <DropTool label="Numbering options" />
          <Tool aria-label="Multilevel list"><MultiLevel /></Tool>
          <DropTool label="Multilevel options" width={9} />
          <Divider />
          <Tool aria-label="Increase indent"><Indent /></Tool>
          <Tool aria-label="Decrease indent"><Indent out /></Tool>
          <Divider />
          <Tool $width={24} $pressed aria-label="Right to left"><Direction rtl /></Tool>
          <Tool aria-label="Left to right"><Direction /></Tool>
          <Divider />
          <Tool $width={24} aria-label="Sort"><Sort /></Tool>
          <Divider />
          <Tool $width={24} aria-label="Show marks">
            <Svg w={11}><Letter x={0} y={13} size={18} color="#333" weight={400} family="Liberation Sans">¶</Letter></Svg>
          </Tool>
        </ToolRow>
        <ToolRow>
          <Tool $width={24} aria-label="Align right"><Lines rows={[[0, 14], [4, 10], [0, 14], [4, 10], [0, 14], [4, 10]]} /></Tool>
          <Tool $width={24} $pressed aria-label="Centre"><Lines rows={[[0, 14], [2, 10], [0, 14], [2, 10], [0, 14], [2, 10]]} /></Tool>
          <Tool $width={24} aria-label="Align left"><Lines rows={[[0, 14], [0, 10], [0, 14], [0, 10], [0, 14], [0, 10]]} /></Tool>
          <Tool aria-label="Justify"><Lines rows={[[0, 14], [0, 14], [0, 14], [0, 14], [0, 14], [0, 14]]} /></Tool>
          <Divider />
          <Tool aria-label="Line spacing"><LineSpacing /></Tool>
          <DropTool label="Line spacing options" />
          <Divider />
          <Tool aria-label="Shading"><Bucket /></Tool>
          <DropTool label="Shading options" />
          <Tool aria-label="Borders"><Borders /></Tool>
          <DropTool label="Border options" />
        </ToolRow>
      </Stack>
    </GroupBody>
    <GroupLabel>פיסקה</GroupLabel>
  </Group>
);

const StylesGroup = () => (
  <Group>
    <GroupBody>
      <Gallery>
        <GalleryItems>
          {STYLES.map(s => (
            <StyleItem key={s.name} $active={s.active}>
              <Preview $bold={s.bold} $italic={s.italic} $color={s.color} $size={s.size} $line={s.line} $justify={s.justify} $serif={s.serif}>
                <span>{s.sample || SAMPLE}</span>
              </Preview>
              {s.name}
            </StyleItem>
          ))}
        </GalleryItems>
        <GalleryScroll>
          <ScrollStep aria-label="Previous styles"><Arrow up color="#c5c9cd" /></ScrollStep>
          <ScrollStep aria-label="Next styles"><Arrow color="#555" /></ScrollStep>
          <ScrollStep aria-label="All styles">
            <Svg w={7} h={6}><path d="M0 .5H7" stroke="#555" /><path d="M1 3H6L3.500 6Z" fill="#555" /></Svg>
          </ScrollStep>
        </GalleryScroll>
      </Gallery>
      <BigCommand $width={57}>
        <ChangeStyles />
        <span>שנה</span>
        <span>סגנונות<Arrow /></span>
      </BigCommand>
    </GroupBody>
    <GroupLabel>סגנונות</GroupLabel>
  </Group>
);

const EditingGroup = () => (
  <Group $width={69}>
    <GroupBody>
      <SmallCommands>
        <SmallCommand><Binoculars />חפש<Arrow /></SmallCommand>
        <SmallCommand><Replace />החלף</SmallCommand>
        <SmallCommand><SelectArrow />בחר<Arrow /></SmallCommand>
      </SmallCommands>
    </GroupBody>
    <GroupLabel launcher={false}>עריכה</GroupLabel>
  </Group>
);

const QuickAccessBar = () => (
  <QuickAccess>
    <Tool aria-label="Save"><Save /></Tool>
    <Tool aria-label="Redo"><Redo /></Tool>
    <DropTool label="Redo options" color="#222" />
    <Tool aria-label="Undo"><Undo /></Tool>
    <Tool aria-label="Character spacing"><Spacing /></Tool>
    <Tool aria-label="Replace text"><GrayReplace /></Tool>
    <Tool aria-label="Fill"><Bucket off /></Tool>
    <DropTool label="Fill options" color="#888" />
    <Tool aria-label="WordArt"><WordArt /></Tool>
    <DropTool label="WordArt options" color="#222" width={9} />
    <Tool aria-label="Text outline"><Scribble /></Tool>
    <Tool aria-label="Text shadow"><WordArt gray /></Tool>
    <DropTool label="Shadow options" color="#999" width={9} />
    <Tool aria-label="Customise toolbar">
      <Svg w={7} h={7}><path d="M0 .5H7" stroke="#111" /><path d="M0 3H7L3.500 7Z" fill="#111" /></Svg>
    </Tool>
  </QuickAccess>
);

const Document = () => (
  <PageColumn>
    <HRuler>
      <HScale>
        <HCells><Scale marks={H_MARKS} /></HCells>
      </HScale>
      <Marker $top={4} $left={103} width="9" height="9">
        <path d="M.5 8.500V4L4.500 .5L8.500 4V8.500Z" fill="#e1e3e6" stroke="#868d96" />
      </Marker>
      <Marker $top={-4} $left={598} width="9" height="22">
        <path d="M.5 .5H8.500V3L.5 11.500V14.500H8.500V11.500L.5 3Z" fill="#f1f2f4" stroke="#868d96" />
        <path d="M.5 15.500H8.500V20.500H.5Z" fill="#e1e3e6" stroke="#868d96" />
      </Marker>
    </HRuler>
    <TabStops>{range(1, 11).map(n => <i key={n} />)}</TabStops>
    <Page>
      <FirstLine><span>נספח ׳׳א׳׳<Caret /></span></FirstLine>
      <p>הראייה</p>
      <p>החותכת</p>
      <p>לצדקתנו</p>
    </Page>
  </PageColumn>
);

const LeftScroll = () => (
  <ScrollBar>
    <SplitHandle />
    <ScrollButton $framed aria-label="Select objects"><SelectObject /></ScrollButton>
    <ScrollButton $line aria-label="Pan"><Hand /></ScrollButton>
    <ScrollButton aria-label="Scroll up">
      <Svg w={9} h={5}><path d="M0 5L4.500 0L9 5Z" fill="#444" /></Svg>
    </ScrollButton>
    <Track>
      <Thumb>
        <Svg w={8} h={7}><path d="M0 .5H8M0 2.500H8M0 4.500H8M0 6.500H8" stroke="#868d96" /></Svg>
      </Thumb>
    </Track>
    <ScrollButton $line aria-label="Scroll down">
      <Svg w={9} h={5}><path d="M0 0H9L4.500 5Z" fill="#444" /></Svg>
    </ScrollButton>
    <ScrollButton aria-label="Previous page">
      <Svg w={5} h={7}><path d="M0 3L2.500 0L5 3ZM0 6L2.500 3L5 6ZM0 6H5V7H0Z" fill="#333" /></Svg>
    </ScrollButton>
    <ScrollButton aria-label="Browse by">
      <Svg w={7} h={7}><circle cx="3.500" cy="3.500" r="3" stroke="#666" fill="#c7cbd2" /></Svg>
    </ScrollButton>
    <ScrollButton aria-label="Next page">
      <Svg w={5} h={7}><path d="M0 0H5V1H0ZM0 1H5L2.500 4ZM0 4H5L2.500 7Z" fill="#333" /></Svg>
    </ScrollButton>
  </ScrollBar>
);

const Status = () => {
  const [zoom, setZoom] = useState(45);

  return (
    <StatusBar>
      <StatusItem>עמוד: 1 מתוך 1</StatusItem>
      <StatusLine />
      <StatusItem>מילים: 5</StatusItem>
      <StatusLine />
      <StatusItem aria-label="Proofing"><Proof /></StatusItem>
      <StatusItem>עברית</StatusItem>
      <StatusLine />
      <Zoom>
        <StatusLine />
        <ViewButton $active aria-label="Print layout"><PrintView /></ViewButton>
        <ViewButton aria-label="Reading"><ReadView /></ViewButton>
        <ViewButton aria-label="Web layout"><WebView /></ViewButton>
        <ViewButton aria-label="Outline"><Lines color="#777" w={10} rows={[[0, 7], [3, 7], [4, 6], [3, 7], [0, 7]]} /></ViewButton>
        <ViewButton aria-label="Draft"><Lines color="#777" w={10} rows={[[0, 10], [0, 10], [0, 10], [0, 10], [0, 10]]} /></ViewButton>
        <ZoomValue dir="ltr">90%</ZoomValue>
        <button aria-label="Zoom out"><ZoomSign /></button>
        <ZoomSlider type="range" aria-label="Zoom" value={zoom} onChange={e => setZoom(e.target.value)} />
        <button aria-label="Zoom in"><ZoomSign plus /></button>
      </Zoom>
    </StatusBar>
  );
};

const WindowsBar = () => (
  <Taskbar>
    <AppButton aria-label="Start"><Start /></AppButton>
    <AppButton aria-label="Search"><Search /></AppButton>
    <AppButton aria-label="Task view"><TaskView /></AppButton>
    <AppList>
      {APPS.map(app => (
        <AppButton key={app.name} $open={app.open} $active={app.active} aria-label={app.name}>
          {app.icon}
        </AppButton>
      ))}
    </AppList>
    <Tray>
      <TrayButton aria-label="Hidden icons">
        <Svg w={12} h={7}><path d="M.5 6.500L6 1L11.500 6.500" stroke="#fff" strokeWidth="1.300" /></Svg>
      </TrayButton>
      <TrayButton aria-label="Dropbox"><DropboxSynced /></TrayButton>
      <TrayButton aria-label="Network"><Network /></TrayButton>
      <TrayButton aria-label="Volume"><Sound /></TrayButton>
      <TrayButton aria-label="Mega"><Mega /></TrayButton>
      <TrayButton aria-label="Cloud"><Cloud /></TrayButton>
      <TrayButton $width={28} aria-label="Pen"><Pen /></TrayButton>
      <TrayText $width={38} $align="flex-start" $pad={10}>
        <span>עבר</span>
        <span>HE3</span>
      </TrayText>
      <TrayText $width={72} dir="ltr">
        <span>00:57</span>
        <span>22/09/2017</span>
      </TrayText>
      <AppButton aria-label="Notifications"><Notifications /></AppButton>
    </Tray>
  </Taskbar>
);

const App = () => (
  <Screen dir="rtl">
    <GlobalStyle />
    <TitleBar>
      <AppIcon><WordMark /></AppIcon>
      <Title dir="ltr">{'Microsoft Word  -  Document1'}</Title>
      <WindowControls>
        <WindowButton aria-label="Minimise"><Svg w={10} h={10}><path d="M0 5.500H10" stroke="#111" /></Svg></WindowButton>
        <WindowButton aria-label="Restore"><Svg w={10} h={10}><path d="M2.500 2V.5H9.500V7.500H8M.5 2.500H7.500V9.500H.5Z" stroke="#111" /></Svg></WindowButton>
        <WindowButton aria-label="Close"><Svg w={10} h={10}><path d="M0 0L10 10M10 0L0 10" stroke="#111" /></Svg></WindowButton>
      </WindowControls>
      <Pointer width="10" height="8"><path d="M0 4L4 0V3H6V0L10 4L6 8V5H4V8Z" fill="#111" /></Pointer>
    </TitleBar>
    <TabStrip>
      <Tab $file>קובץ</Tab>
      <Tab $active>בית</Tab>
      {TABS.map(name => <Tab key={name}>{name}</Tab>)}
      <Tab $latin>Foxit Reader PDF</Tab>
      <TabTools>
        <button aria-label="Collapse ribbon">
          <Svg w={9} h={8}><path d="M.5 4.500L4.500 .5L8.500 4.500V7L4.500 4L.5 7Z" stroke="#555" /></Svg>
        </button>
        <button aria-label="Help"><Help /></button>
      </TabTools>
    </TabStrip>
    <Ribbon>
      <ClipboardGroup />
      <FontGroup />
      <ParagraphGroup />
      <StylesGroup />
      <EditingGroup />
    </Ribbon>
    <QuickAccessBar />
    <Workspace>
      <RulerColumn>
        <TabSelector aria-label="Tab stop type">
          <i><Svg w={6} h={6}><path d="M5 0V5H0" stroke="#333" strokeWidth="2" /></Svg></i>
        </TabSelector>
        <VRuler><Scale marks={V_MARKS} vertical /></VRuler>
      </RulerColumn>
      <Document />
      <LeftScroll />
    </Workspace>
    <Status />
    <WindowsBar />
  </Screen>
);

export default App;
